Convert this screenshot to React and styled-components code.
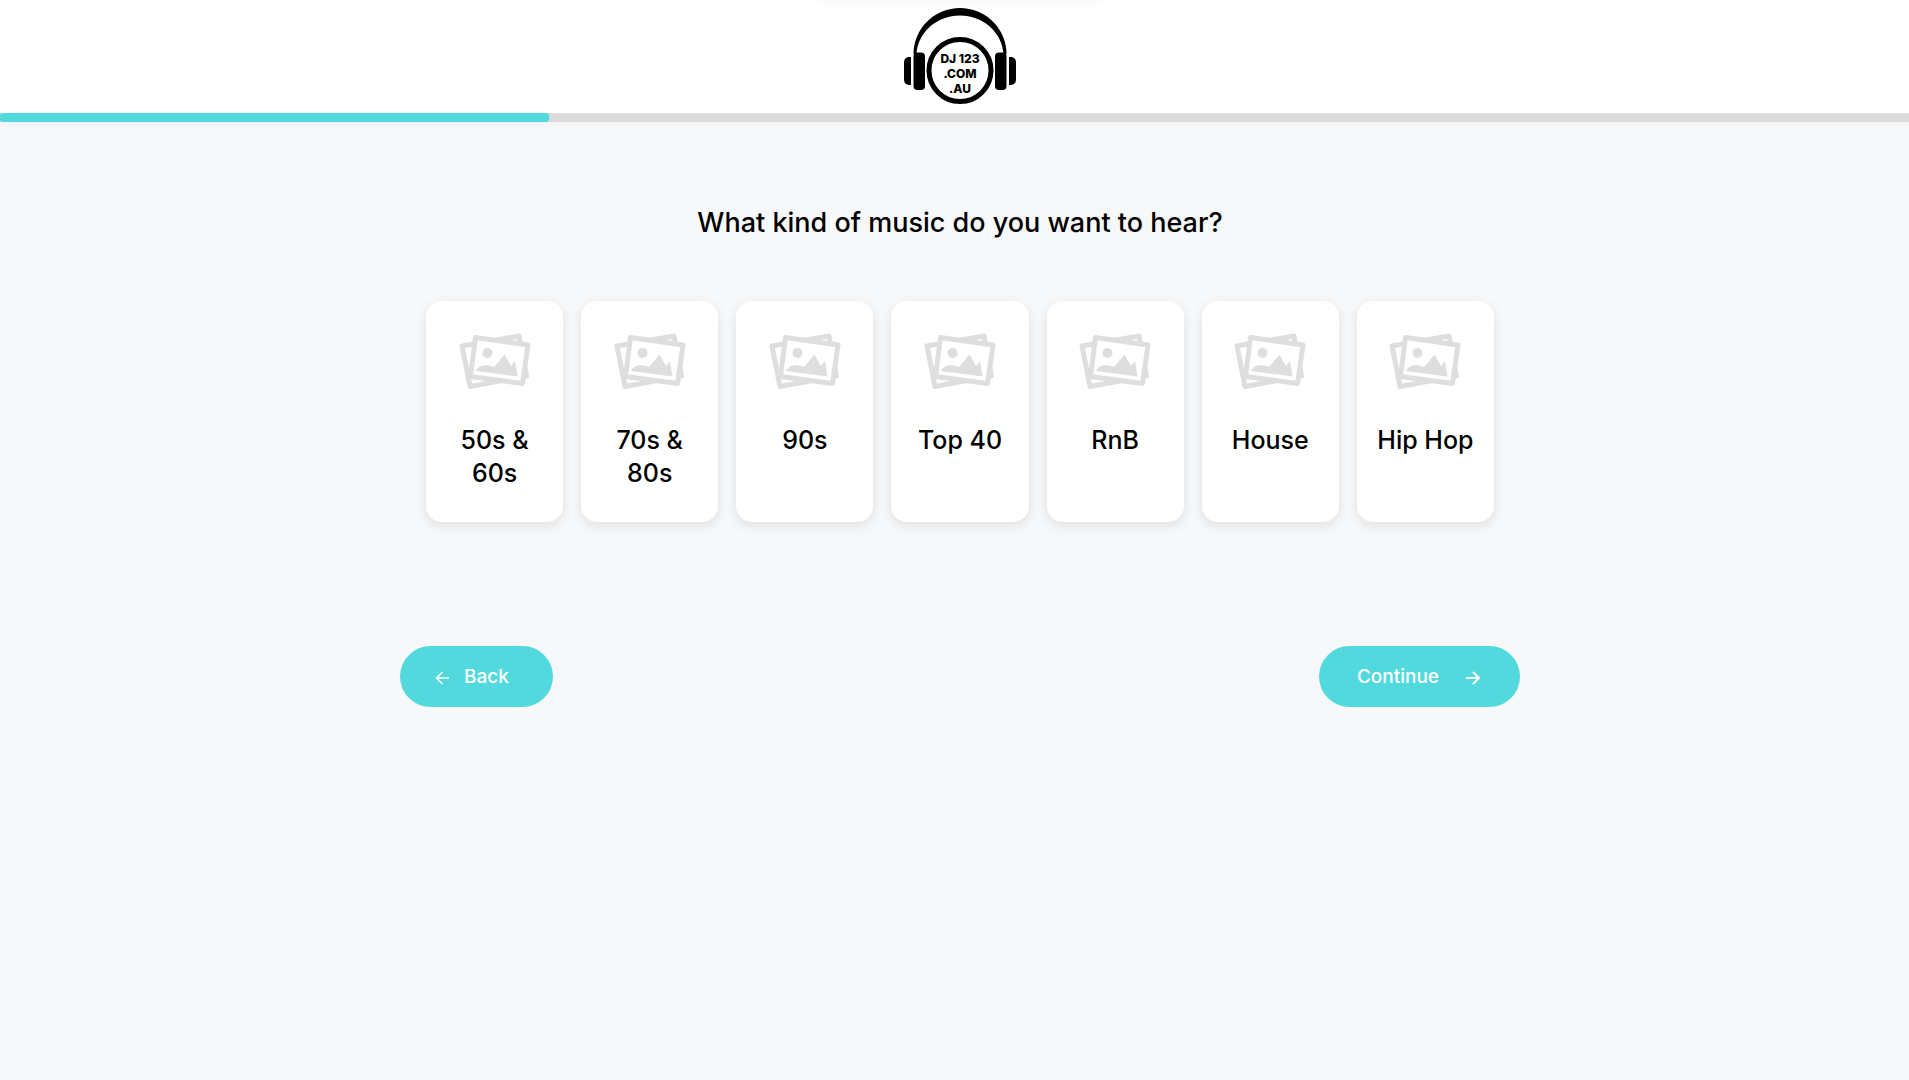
import React, { useState } from "react"
import styled, { createGlobalStyle } from "styled-components"

const GlobalStyle = createGlobalStyle`
  * {
    box-sizing: border-box;
  }
  body {
    margin: 0;
    background-color: #f7f8fa;
    color: #000;
    font-family: Inter, "Open Sans", sans-serif;
    overflow-x: hidden;
  }
`

/* runs under the scrollbar gutter on the right */
const Page = styled.div`
  margin-right: -11px;
  min-height: 100vh;
`

const Header = styled.header`
  display: flex;
  justify-content: center;
  height: 113px;
  padding-top: 8px;
  background-color: #fff;
  position: relative;
`

const TopShadow = styled.div`
  position: absolute;
  top: -12px;
  left: calc(50% - 140px);
  width: 280px;
  height: 10px;
  border-radius: 8px;
  box-shadow: 0 0 12px rgba(0, 0, 0, 0.08);
`

const LogoSvg = styled.svg`
  width: 112px;
  height: 96px;
  font-family: Inter, sans-serif;
  font-weight: 800;
  font-size: 12px;
  text-anchor: middle;
`

const Track = styled.div`
  height: 9px;
  background-color: #dbdbdb;
  box-shadow: 0 2px 6px rgba(0, 0, 0, 0.03);
`

const Fill = styled.div`
  height: 100%;
  background-color: #51d9de;
  border-radius: 3px;
`

const Main = styled.main`
  max-width: 1120px;
  margin: 0 auto;
  padding-top: 84px;
`

const Question = styled.h1`
  margin: 0;
  font-size: 27px;
  line-height: 34px;
  font-weight: 500;
  text-align: center;
`

const Options = styled.div`
  display: grid;
  grid-template-columns: repeat(7, 1fr);
  gap: 18px;
  padding: 0 26px;
  margin-top: 61px;
`

const Option = styled.button`
  display: flex;
  flex-direction: column;
  align-items: center;
  gap: 33px;
  min-height: 221px;
  padding: 32px 16px;
  border: none;
  border-radius: 16px;
  background-color: #fff;
  box-shadow: 0 4px 12px rgba(0, 20, 10, 0.1);
  color: #000;
  font-family: inherit;
  font-size: 25px;
  line-height: 33px;
  font-weight: 500;
  cursor: pointer;
`

const PhotosSvg = styled.svg`
  flex: none;
  width: 72px;
  height: 58px;
`

const Nav = styled.div`
  display: flex;
  justify-content: space-between;
  margin-top: 124px;
`

const NavButton = styled.button`
  display: flex;
  align-items: center;
  gap: ${(props) => props.$gap};
  height: 61px;
  padding: ${(props) => props.$padding};
  border: none;
  border-radius: 31px;
  background-color: #51d9de;
  color: #fff;
  font-family: inherit;
  font-size: 19px;
  line-height: 24px;
  font-weight: 500;
  cursor: pointer;
`

const ArrowSvg = styled.svg`
  width: 16px;
  height: 16px;
  fill: none;
  stroke: currentColor;
`

const genres = ["50s & 60s", "70s & 80s", "90s", "Top 40", "RnB", "House", "Hip Hop"]

function Logo() {
  return (
    <LogoSvg viewBox="0 0 112 96" role="img" aria-label="DJ 123 .COM .AU">
      <path d="M9.500 46 A46.500 46 0 0 1 102.500 46 L99.500 46 C98 24 79 7.500 56 7.500 C33 7.500 14 24 12.500 46 Z" />
      <rect x="9.500" y="44.500" width="11.500" height="37.500" rx="4" />
      <rect x="91" y="44.500" width="11.500" height="37.500" rx="4" />
      <path d="M7 49 V77 H5 A5 5 0 0 1 0 72 V54 A5 5 0 0 1 5 49 Z" />
      <path d="M105 49 V77 H107 A5 5 0 0 0 112 72 V54 A5 5 0 0 0 107 49 Z" />
      <circle cx="56" cy="62.500" r="31" fill="#fff" stroke="#000" strokeWidth="5" />
      <text x="56" y="55">DJ 123</text>
      <text x="56" y="70">.COM</text>
      <text x="56" y="85">.AU</text>
    </LogoSvg>
  )
}

function Photos() {
  return (
    <PhotosSvg viewBox="0 0 72 58" aria-hidden="true">
      <g fill="#fff" stroke="#dedede" strokeWidth="5" strokeLinejoin="round">
        <path d="M3 13 L60 3 L67.500 43 L11 53.500 Z" />
        <path d="M16.500 4.500 L69 12 L63.500 50.500 L11.500 43.500 Z" />
      </g>
      <g fill="#dedede">
        <circle cx="28.500" cy="20" r="5" />
        <path d="M17 38 C20 31.500 28 31 35 34 L45.500 21.500 L52 33 L56 28 L58.500 43.500 Z" />
      </g>
    </PhotosSvg>
  )
}

function App() {
  const [selected, setSelected] = useState([])

  function toggleGenre(genre) {
    if (selected.includes(genre)) {
      setSelected(selected.filter((g) => g !== genre))
    } else {
      setSelected([...selected, genre])
    }
  }

  return (
    <Page>
      <GlobalStyle />
      <Header>
        <TopShadow />
        <Logo />
      </Header>
      <Track>
        <Fill style={{ width: `${(2 / 7) * 100}%` }} />
      </Track>
      <Main>
        <Question>What kind of music do you want to hear?</Question>
        <Options>
          {genres.map((genre) => (
            <Option
              key={genre}
              type="button"
              aria-pressed={selected.includes(genre)}
              onClick={() => toggleGenre(genre)}
            >
              <Photos />
              <span>{genre}</span>
            </Option>
          ))}
        </Options>
        <Nav>
          <NavButton type="button" $gap="14px" $padding="0 44px 0 34px">
            <ArrowSvg viewBox="0 0 16 16" strokeWidth="1.500">
              <path d="M15 9 H3 M8.500 3 L2.500 9 L8.500 15" />
            </ArrowSvg>
            Back
          </NavButton>
          <NavButton type="button" $gap="26px" $padding="0 39px 0 38px">
            Continue
            <ArrowSvg viewBox="0 0 16 16" strokeWidth="2">
              <path d="M1 9 H14 M8 3 L14 9 L8 15" />
            </ArrowSvg>
          </NavButton>
        </Nav>
      </Main>
    </Page>
  )
}

export default App
